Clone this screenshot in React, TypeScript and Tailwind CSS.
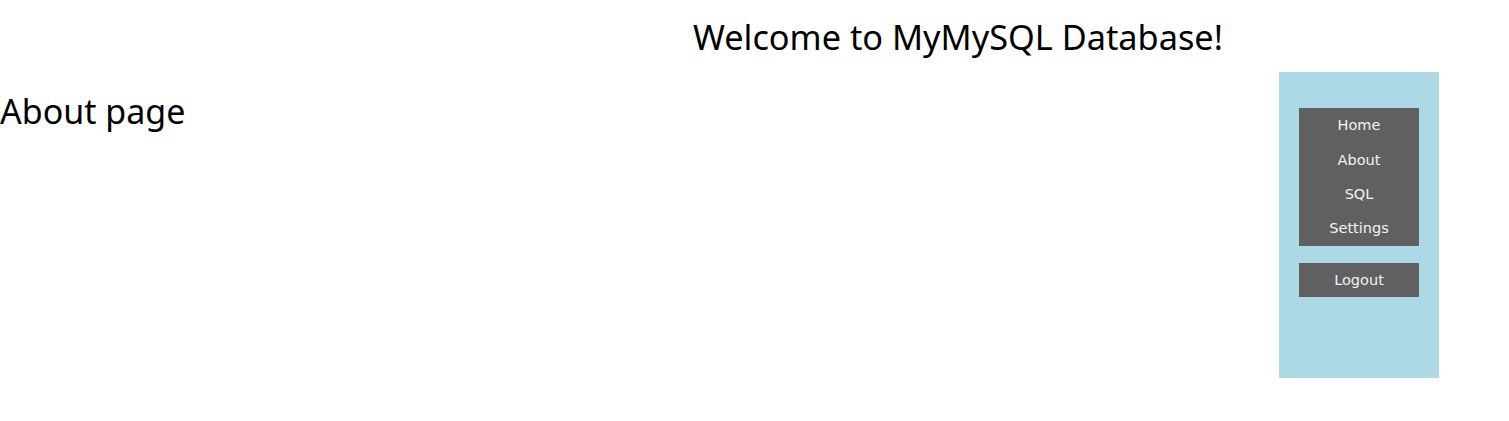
const navItems = ["Home", "About", "SQL", "Settings"];

const App = () => {
  return (
    <div className="min-h-screen bg-white text-black font-['Noto_Sans',sans-serif]">
      <header className="pl-[693px] pt-[13px] h-[72px]">
        <h1 className="text-[34.3px] leading-[48px] whitespace-nowrap">Welcome to MyMySQL Database!</h1>
      </header>
      <div className="flex items-start">
        <main className="flex-1">
          <h2 className="text-[34px] leading-[46px] mt-[16px]">About page</h2>
        </main>
        <aside className="w-[160px] h-[306px] mr-[70px] bg-[#add8e6] px-[20px] pt-[36px] font-['DejaVu_Sans',sans-serif] text-[14.5px] text-[#f2f2f2]">
          <nav className="bg-[#606060] flex flex-col pt-[1px]">
            {navItems.map((item) => (
              <a key={item} className="h-[34.25px] shrink-0 flex items-center justify-center">
                {item}
              </a>
            ))}
          </nav>
          <button className="mt-[17px] w-full h-[34px] pt-[2px] bg-[#606060] flex items-center justify-center">
            Logout
          </button>
        </aside>
      </div>
    </div>
  );
};

export default App;
